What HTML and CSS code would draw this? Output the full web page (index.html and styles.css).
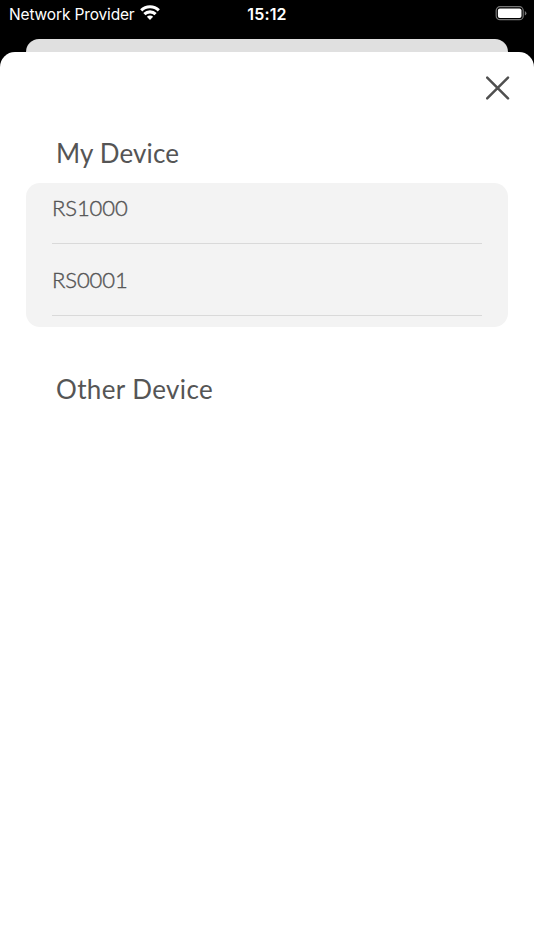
FILE: index.html
```html
<!DOCTYPE html>
<html lang="en">
<head>
<meta charset="utf-8">
<title>Devices</title>
<link rel="stylesheet" href="styles.css">
</head>
<body>

<div class="status-bar">
  <div class="carrier">
    <span class="carrier-name">Network Provider</span>
    <svg class="wifi" width="20" height="15" viewBox="0 0 20 15" fill="none" stroke="#fff" stroke-width="3.1">
      <path d="M1.2 5.4a12.6 12.6 0 0 1 17.6 0"/>
      <path d="M4.4 9.2a7.9 7.9 0 0 1 11.2 0"/>
      <path d="M10 14.9L6.9 11.8a4.4 4.4 0 0 1 6.2 0z" fill="#fff" stroke="none"/>
    </svg>
  </div>
  <span class="time">15:12</span>
  <svg class="battery" width="32" height="15" viewBox="0 0 32 15">
    <rect x="1.2" y="0.7" width="27" height="13" rx="3.8" fill="none" stroke="#777" stroke-width="1.2"/>
    <rect x="2.9" y="2.4" width="23.6" height="9.6" rx="2" fill="#fff"/>
    <path d="M29.8 5v4.6q1.6-.7 1.6-2.3t-1.6-2.3z" fill="#777"/>
  </svg>
</div>

<div class="back-sheet"></div>

<div class="sheet">
  <div class="toolbar">
    <button class="close" aria-label="Close">
      <svg width="24" height="24" viewBox="0 0 24 24" stroke="#4f4f4f" stroke-width="2.5" stroke-linecap="round">
        <path d="M1.2 1.6l20.8 20.8M22 1.6L1.2 22.4"/>
      </svg>
    </button>
  </div>

  <h2 class="my-title"><span>My Device</span></h2>
  <ul class="devices">
    <li>RS1000</li>
    <li>RS0001</li>
  </ul>

  <h2 class="other-title"><span>Other Device</span></h2>
</div>

</body>
</html>
```

FILE: styles.css
```css
* {
  box-sizing: border-box;
}

body {
  margin: 0;
  height: 950px;
  display: flex;
  flex-direction: column;
  background: #000;
  color: #555;
  font-family: Lato, "Liberation Sans", sans-serif;
}

.status-bar {
  display: grid;
  grid-template-columns: 1fr auto 1fr;
  height: 39px;
  padding: 5px 7px 0 9px;
  color: #fff;
  font: 16px/18px Inter, "Liberation Sans", sans-serif;
}

.carrier {
  display: flex;
  gap: 5px;
}

.carrier-name {
  padding-top: 1px;
  font-size: 15.5px;
  letter-spacing: -0.15px;
}

.time {
  margin-left: -2px;
  font-weight: 600;
  letter-spacing: 0.15px;
}

.battery {
  justify-self: end;
  margin-top: 1px;
}

.back-sheet {
  height: 13px;
  margin: 0 26px;
  border-radius: 13px 13px 0 0;
  background: #e0e0e0;
}

.sheet {
  flex: 1;
  border-radius: 15px 15px 0 0;
  background: #fff;
}

.toolbar {
  display: flex;
  justify-content: flex-end;
  height: 85px;
  padding: 24px 24px 0 0;
}

.close {
  width: 24px;
  height: 24px;
  padding: 0;
  border: 0;
  background: none;
}

.close svg {
  display: block;
}

h2 {
  margin: 0 56px;
  font-size: 26px;
  line-height: 32px;
  font-weight: 400;
  letter-spacing: 0.38px;
}

.my-title {
  letter-spacing: 0.15px;
}

.devices {
  margin: 14px 26px 46px;
  padding: 0 26px 11px;
  list-style: none;
  border-radius: 14px;
  background: #f3f3f3;
}

.devices li {
  display: flex;
  align-items: center;
  height: 72px;
  border-bottom: 1px solid #d9d9d9;
  font-size: 22px;
  font-weight: 300;
  letter-spacing: -0.1px;
  -webkit-text-stroke: 0.4px #555;
}

/* first row sits partly under the top edge of the list */
.devices li:first-child {
  height: 61px;
  padding-bottom: 11px;
}
```
